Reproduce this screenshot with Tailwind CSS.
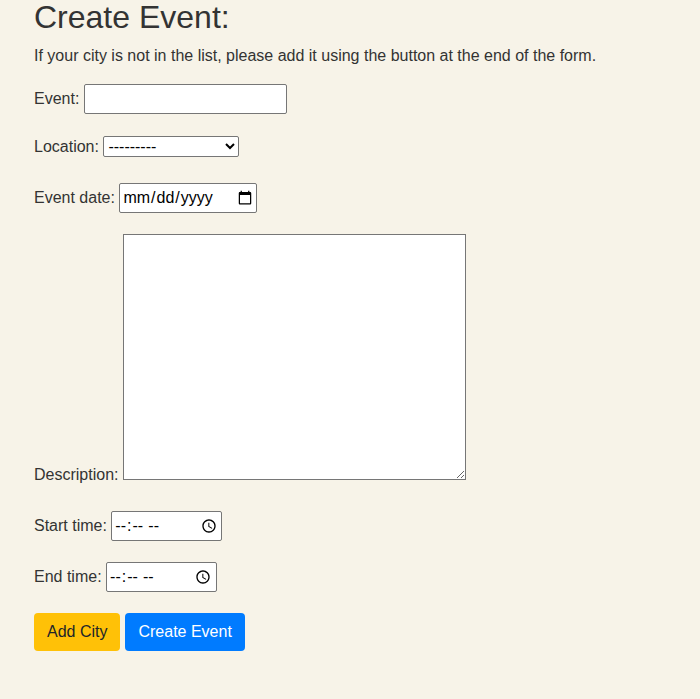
<!DOCTYPE html>
<html lang="en">
<head>
<meta charset="utf-8">
<title>Create Event</title>
<script src="https://cdn.jsdelivr.net/npm/@tailwindcss/browser@4"></script>
</head>
<body class="min-h-screen bg-[#f7f3e8] font-['Liberation_Sans',Arial,sans-serif] text-base text-[#333333]">
<main class="px-[34px] pb-12">
  <h1 class="mb-[10px] text-[32px] leading-[34px]">Create Event:</h1>
  <p class="mb-4">If your city is not in the list, please add it using the button at the end of the form.</p>
  <form>
    <div class="mb-[21px]">
      <label for="event">Event:</label>
      <input id="event" type="text" class="h-[30px] w-[203px] rounded-[2px] border border-[#767676] bg-white px-1">
    </div>
    <div class="mb-6">
      <label for="location">Location:</label>
      <select id="location" class="h-[21px] w-[136px] rounded-[2px] border border-[#767676] bg-white text-base leading-none text-black"><option>---------</option></select>
    </div>
    <div class="mb-[21px]">
      <label for="date">Event date:</label>
      <input id="date" type="date" class="h-[30px] w-[138px] rounded-[2px] border border-[#767676] bg-white pr-px pl-[2px] text-black">
    </div>
    <div class="mb-6">
      <label for="description">Description:</label>
      <textarea id="description" class="inline-block h-[246px] w-[343px] border border-[#767676] bg-white p-[2px] align-baseline"></textarea>
    </div>
    <div class="mb-[21px]">
      <label for="start">Start time:</label>
      <input id="start" type="time" class="h-[30px] w-[111px] rounded-[2px] border border-[#767676] bg-white pr-px pl-[2px] text-black">
    </div>
    <div class="mb-[21px]">
      <label for="end">End time:</label>
      <input id="end" type="time" class="h-[30px] w-[111px] rounded-[2px] border border-[#767676] bg-white pr-px pl-[2px] text-black">
    </div>
    <div class="flex gap-[5px]">
      <button type="button" class="h-[38px] rounded bg-[#ffc107] px-[13px] text-[#212529]">Add City</button>
      <button type="submit" class="h-[38px] rounded bg-[#007bff] px-[13px] text-white">Create Event</button>
    </div>
  </form>
</main>
</body>
</html>
